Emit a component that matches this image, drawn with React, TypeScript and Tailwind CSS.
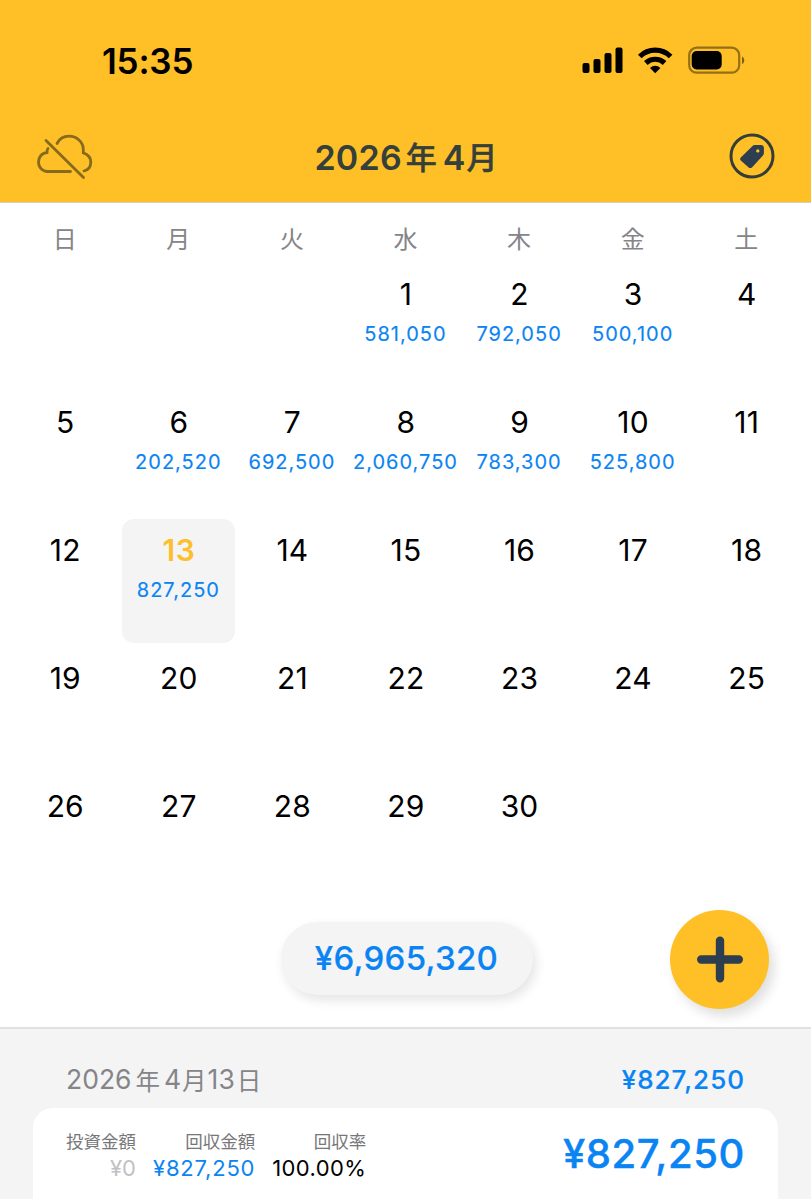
import React from "react";

const weekdays = ["日", "月", "火", "水", "木", "金", "土"];

const amounts: Record<number, string> = {
  1: "581,050",
  2: "792,050",
  3: "500,100",
  6: "202,520",
  7: "692,500",
  8: "2,060,750",
  9: "783,300",
  10: "525,800",
  13: "827,250",
};

const cells: (number | null)[] = [
  null,
  null,
  null,
  ...Array.from({ length: 30 }, (_, i) => i + 1),
  null,
  null,
];

function StatusBar() {
  return (
    <div className="flex h-[119px] items-start justify-between pl-[102px] pr-[66px]">
      <div className="pt-[41px] text-[35px] leading-[40px] font-semibold tracking-[-0.2px] text-black">15:35</div>
      <svg className="mt-[40px]" width="165" height="40" viewBox="0 0 165 40">
        <g>
          <rect x="2.5" y="23" width="7" height="10" rx="2" />
          <rect x="13.5" y="19" width="7" height="14" rx="2" />
          <rect x="24.5" y="13" width="7" height="20" rx="2" />
          <rect x="35.5" y="7.5" width="7" height="25.5" rx="2" />
        </g>
        <g fill="none" stroke="#000" strokeWidth="5.200">
          <path d="M59.800 16.500a22 22 0 0 1 30.800 0" />
          <path d="M65.800 23a13.600 13.600 0 0 1 18.800 0" />
        </g>
        <path d="M75.200 33.200l-5.200-5.300a7.600 7.600 0 0 1 10.400 0z" />
        <rect x="109.2" y="7.7" width="50" height="25" rx="7.5" fill="none" stroke="#000" strokeOpacity=".42" strokeWidth="2.2" />
        <rect x="111.7" y="11" width="30" height="18.5" rx="5" />
        <path d="M162 16.4c3 1.5 3 6 0 7.6z" fillOpacity=".5" />
      </svg>
    </div>
  );
}

function CloudOffIcon() {
  return (
    <svg className="mt-[4px]" width="60" height="50" viewBox="0 0 60 50" fill="none" stroke="#866b1c" strokeWidth="2.8" strokeLinecap="round">
      <path d="M12 15.500C11 16.500 11 18 11 19.500C5.500 20 2.500 24.500 2.500 29C2.500 34.500 6.500 38.500 11.500 38.500H34.500" />
      <path d="M21 10.500C23.500 5.500 28.500 3.200 33 3.200C40.500 3.200 47.300 9 47.300 16.500V19.800C51.500 21.200 54.800 24.500 54.800 29.300C54.800 33.800 52.200 37 48 38" />
      <path d="M10 7.500L47.500 44.500" />
    </svg>
  );
}

function TagIcon() {
  return (
    <svg width="48" height="48" viewBox="0 0 48 48">
      <circle cx="24" cy="24" r="21" fill="none" stroke="#343e38" strokeWidth="3" />
      <path
        fill="#2c3e50"
        fillRule="evenodd"
        d="M12.800 25.500L24.300 14.200Q25.300 13.200 26.800 13.100L33 12.900Q35.800 13 35.900 15.700V21Q35.900 22.600 34.700 23.800L24.200 35.200Q22.300 37 20.400 35.200L12.800 28.500Q11.200 27 12.800 25.500ZM29.800 17.200a1.700 1.700 0 1 0 0 3.400a1.700 1.700 0 0 0 0-3.400Z"
      />
    </svg>
  );
}

function Header() {
  return (
    <header className="h-[203px] border-b border-[#d9cdb4] bg-[#ffbf26]">
      <StatusBar />
      <div className="grid h-[74px] grid-cols-[1fr_auto_1fr] items-center pl-[36px] pr-[35px]">
        <CloudOffIcon />
        <h1 className="flex items-center text-[34px] font-semibold text-[#353f3b]">
          <span className="mt-[2px] tracking-[0.2px]">2026</span>
          <span className="mt-[4px] ml-[4px] text-[31px] font-medium [-webkit-text-stroke:0.5px_#353f3b]">年</span>
          <span className="mt-[2px] ml-[6px]">4</span>
          <span className="mt-[4px] ml-[1px] text-[31px] font-medium [-webkit-text-stroke:0.5px_#353f3b]">月</span>
        </h1>
        <div className="flex justify-end">
          <TagIcon />
        </div>
      </div>
    </header>
  );
}

function DayCell({ day }: { day: number | null }) {
  if (day === null) return <div className="h-[128px]" />;
  const selected = day === 13;
  return (
    <div className="h-[128px]">
      <div className={`flex h-[124px] flex-col items-center rounded-[12px] pt-[11px] ${selected ? "bg-[#f4f4f4]" : ""}`}>
        <span className={`pl-[1px] text-[30px] leading-[40px] ${selected ? "font-semibold tracking-[0.5px] text-[#fdbf2d]" : "tracking-[0.2px] text-black"}`}>
          {day}
        </span>
        {amounts[day] && (
          <span className="mt-[7px] text-[20px] leading-[26px] tracking-[1px] whitespace-nowrap text-[#0b84f3] [-webkit-text-stroke:0.15px_#0b84f3]">
            {amounts[day]}
          </span>
        )}
      </div>
    </div>
  );
}

function Calendar() {
  return (
    <section className="h-[700px] px-[8px] pt-[16px]">
      <div className="grid h-[44px] grid-cols-7">
        {weekdays.map((w) => (
          <div key={w} className="text-center text-[24px] leading-[42px] text-[#858589]">
            {w}
          </div>
        ))}
      </div>
      <div className="grid grid-cols-7">
        {cells.map((d, i) => (
          <DayCell key={i} day={d} />
        ))}
      </div>
    </section>
  );
}

function TotalBar() {
  return (
    <div className="grid h-[124px] grid-cols-[1fr_auto_1fr] items-start pr-[42px] pl-[44px] pt-[7px]">
      <div />
      <div className="mt-[12px] flex h-[73px] w-[252px] items-center justify-center rounded-full bg-[#f4f4f4] text-[33px] font-medium tracking-[0.3px] text-[#0b84f3] shadow-[3px_5px_12px_rgba(0,0,0,0.11)] [-webkit-text-stroke:0.2px_#0b84f3]">
        ¥6,965,320
      </div>
      <div className="flex justify-end">
        <button className="flex size-[99px] items-center justify-center rounded-full bg-[#ffbf26] shadow-[5px_7px_12px_rgba(0,0,0,0.13)]">
          <svg width="48" height="48" viewBox="0 0 48 48" stroke="#2c3e50" strokeWidth="8.400" strokeLinecap="round">
            <path d="M24 4.700V42.300M5.200 23.500H42.800" />
          </svg>
        </button>
      </div>
    </div>
  );
}

function Stat({ label, value, className }: { label: string; value: string; className: string }) {
  return (
    <div className="flex flex-col items-end whitespace-nowrap">
      <span className="text-[17.5px] leading-[26px] text-[#77777a]">{label}</span>
      <span className={`text-[22px] leading-[27px] ${className}`}>{value}</span>
    </div>
  );
}

function Details() {
  return (
    <section className="h-[172px] border-t-2 border-[#e1e1e1] bg-[#f4f4f4] px-[33px]">
      <div className="flex h-[79px] items-center justify-between pt-[22px] pr-[33px] pl-[34px]">
        <div className="flex items-center text-[26.5px] text-[#858589]">
          <span className="mt-[1px] -ml-px">2026</span>
          <span className="mt-[3px] ml-[4px] text-[24.5px]">年</span>
          <span className="mt-[1px] ml-[4px]">4</span>
          <span className="mt-[3px] ml-[1px] text-[24.5px]">月</span>
          <span className="mt-[1px] ml-[1px]">13</span>
          <span className="mt-[3px] ml-[2px] text-[24.5px]">日</span>
        </div>
        <div className="text-[26px] font-medium tracking-[1px] text-[#0b84f3] [-webkit-text-stroke:0.2px_#0b84f3]">¥827,250</div>
      </div>
      <div className="flex h-[91px] items-start justify-between rounded-t-[20px] bg-white pr-[33px] pl-[33px]">
        <div className="flex gap-[17px] pt-[21px]">
          <Stat label="投資金額" value="¥0" className="text-[#c1c1c3]" />
          <Stat label="回収金額" value="¥827,250" className="tracking-[0.8px] text-[#0b84f3]" />
          <Stat label="回収率" value="100.00%" className="tracking-[0.4px] text-black" />
        </div>
        <div className="pt-[21px] text-[40px] leading-[50px] font-medium tracking-[0.6px] text-[#0b84f3] [-webkit-text-stroke:0.4px_#0b84f3]">¥827,250</div>
      </div>
    </section>
  );
}

export default function App() {
  return (
    <main className="h-[1199px] w-[811px] overflow-hidden bg-white font-[Inter,'Noto_Sans_CJK_JP',sans-serif]">
      <Header />
      <Calendar />
      <TotalBar />
      <Details />
    </main>
  );
}
